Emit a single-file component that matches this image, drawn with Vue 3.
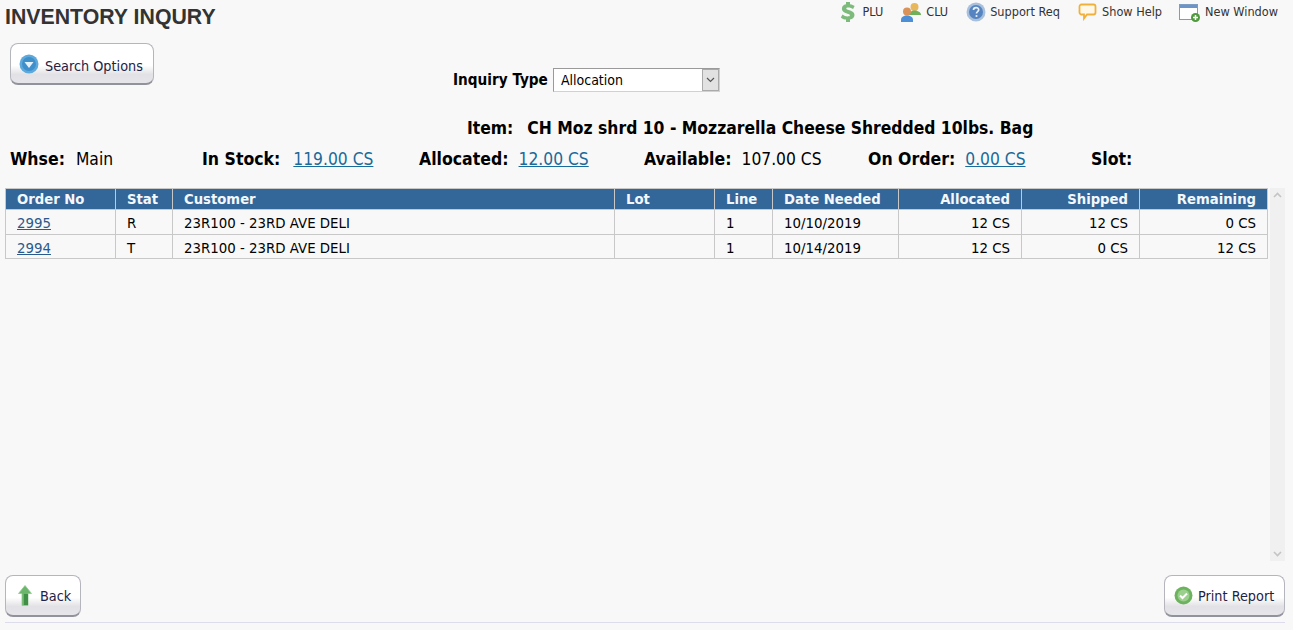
<script setup>
import { ref } from 'vue';

const inquiryType = ref('Allocation');

const columns = [
    { label: 'Order No', width: 110 },
    { label: 'Stat', width: 57 },
    { label: 'Customer', width: 442 },
    { label: 'Lot', width: 100 },
    { label: 'Line', width: 58 },
    { label: 'Date Needed', width: 126 },
    { label: 'Allocated', width: 123, right: true },
    { label: 'Shipped', width: 118, right: true },
    { label: 'Remaining', width: 128, right: true },
];

const rows = [
    { order: '2995', stat: 'R', customer: '23R100 - 23RD AVE DELI', line: '1', date: '10/10/2019', allocated: '12 CS', shipped: '12 CS', remaining: '0 CS' },
    { order: '2994', stat: 'T', customer: '23R100 - 23RD AVE DELI', line: '1', date: '10/14/2019', allocated: '12 CS', shipped: '0 CS', remaining: '12 CS' },
];
</script>

<template>
    <div class="page">
        <header class="top">
            <h1>INVENTORY INQURY</h1>
            <nav class="tools">
                <a class="tool plu">
                    <svg width="18" height="22" viewBox="0 0 18 22">
                        <path d="M7 1h4v2.2c2 .3 3.6 1 4.6 1.8l-1.500 3c-1.300-.8-3-1.500-4.800-1.500-1.300 0-2 .4-2 1 0 .8 1.100 1.100 3 1.700 3 .9 5.200 2 5.200 4.800 0 2.300-1.700 4-4.500 4.500V21H7v-2.400c-2.200-.3-4-1.100-5.200-2.200l1.700-3c1.400 1.100 3.300 2 5.200 2 1.400 0 2.200-.4 2.200-1.200 0-.9-1.200-1.200-3-1.800-2.800-.9-5-2-5-4.700C2.900 5.500 4.500 3.800 7 3.300z" fill="#7dbb7d" />
                    </svg>
                    <span>PLU</span>
                </a>
                <a class="tool clu">
                    <svg width="22" height="20" viewBox="0 0 22 20">
                        <circle cx="14.500" cy="5" r="4" fill="#e8b75c" />
                        <path d="M9 13c0-3 2.500-4.500 5.500-4.500S21 10 21 13z" fill="#6fb05c" />
                        <circle cx="7" cy="9.500" r="4" fill="#d9935a" />
                        <path d="M1 20v-2c0-3 2.500-4.500 6-4.500s6 1.500 6 4.500v2z" fill="#4c8fd6" />
                    </svg>
                    <span>CLU</span>
                </a>
                <a class="tool support">
                    <svg width="20" height="20" viewBox="0 0 20 20">
                        <circle cx="10" cy="10" r="9.500" fill="#a9c0dc" />
                        <circle cx="10" cy="10" r="7" fill="#5584c0" />
                        <path d="M7.500 8c0-3.200 5.200-3.200 5.200-.2 0 1.900-2.200 1.900-2.200 3.700" fill="none" stroke="#e8f0fa" stroke-width="1.700" />
                        <circle cx="10.500" cy="14" r="1.100" fill="#e8f0fa" />
                    </svg>
                    <span>Support Req</span>
                </a>
                <a class="tool help">
                    <svg width="19" height="18" viewBox="0 0 19 18">
                        <path d="M3.500 1.500h12a2 2 0 0 1 2 2v6a2 2 0 0 1-2 2H9l-3 4v-4H3.500a2 2 0 0 1-2-2v-6a2 2 0 0 1 2-2z" fill="#fff8e6" stroke="#f0b13c" stroke-width="1.800" />
                    </svg>
                    <span>Show Help</span>
                </a>
                <a class="tool window">
                    <svg width="22" height="20" viewBox="0 0 22 20">
                        <rect x="0.500" y="2.500" width="18" height="15" fill="#fff" stroke="#7d9cc4" />
                        <rect x="1" y="3" width="17" height="3" fill="#6d94c8" />
                        <circle cx="16.500" cy="15.500" r="4.500" fill="#4f9a3d" />
                        <path d="M16.500 13v5M14 15.500h5" stroke="#fff" stroke-width="1.500" />
                    </svg>
                    <span>New Window</span>
                </a>
            </nav>
        </header>

        <section class="search-row">
            <button class="btn search-btn">
                <svg width="20" height="20" viewBox="0 0 20 20">
                    <circle cx="10" cy="10" r="9.500" fill="#5ea9dc" />
                    <circle cx="10" cy="10" r="7" fill="#3f8fcb" />
                    <path d="M5.500 8h9L10 14z" fill="#e6f2fb" />
                </svg>
                <span>Search Options</span>
            </button>
            <label class="inquiry">
                <b>Inquiry Type</b>
                <span class="fake-select">
                    <span class="select-value">{{ inquiryType }}</span>
                    <span class="select-arrow">
                        <svg width="9" height="6" viewBox="0 0 9 6"><path d="M1 1l3.500 3.500L8 1" fill="none" stroke="#555" stroke-width="1.200" /></svg>
                    </span>
                </span>
            </label>
        </section>

        <div class="item-line"><b class="item-label">Item:</b><b>CH Moz shrd 10 - Mozzarella Cheese Shredded 10lbs. Bag</b></div>

        <div class="summary">
            <div><b>Whse:</b><span>Main</span></div>
            <div><b>In Stock:</b><a>119.00 CS</a></div>
            <div><b>Allocated:</b><a>12.00 CS</a></div>
            <div><b>Available:</b><span>107.00 CS</span></div>
            <div><b>On Order:</b><a>0.00 CS</a></div>
            <div><b>Slot:</b></div>
        </div>

        <div class="grid-area">
            <table>
                <colgroup>
                    <col v-for="c in columns" :key="c.label" :style="{ width: c.width + 'px' }" />
                </colgroup>
                <thead>
                    <tr>
                        <th v-for="c in columns" :key="c.label" :class="{ right: c.right }">{{ c.label }}</th>
                    </tr>
                </thead>
                <tbody>
                    <tr v-for="r in rows" :key="r.order">
                        <td><a>{{ r.order }}</a></td>
                        <td>{{ r.stat }}</td>
                        <td>{{ r.customer }}</td>
                        <td></td>
                        <td>{{ r.line }}</td>
                        <td>{{ r.date }}</td>
                        <td class="right">{{ r.allocated }}</td>
                        <td class="right">{{ r.shipped }}</td>
                        <td class="right">{{ r.remaining }}</td>
                    </tr>
                </tbody>
            </table>
            <div class="scrollbar">
                <svg width="9" height="6" viewBox="0 0 9 6"><path d="M1 5l3.500-3.500L8 5" fill="none" stroke="#c4c4c4" stroke-width="1.600" /></svg>
                <svg width="9" height="6" viewBox="0 0 9 6"><path d="M1 1l3.500 3.500L8 1" fill="none" stroke="#c4c4c4" stroke-width="1.600" /></svg>
            </div>
        </div>

        <footer class="bottom">
            <button class="btn back-btn">
                <svg width="14" height="21" viewBox="0 0 14 21">
                    <path d="M7 0.500L13.500 8.500H10V20.500H4V8.500H0.500z" fill="#6cb56c" stroke="#8fcb8f" stroke-width="0.800" />
                    <rect x="6" y="9" width="4" height="11" fill="#3f8f46" />
                </svg>
                <span>Back</span>
            </button>
            <button class="btn print-btn">
                <svg width="19" height="19" viewBox="0 0 19 19">
                    <circle cx="9.500" cy="9.500" r="9" fill="#6db35f" />
                    <circle cx="9.500" cy="9.500" r="6" fill="#9bcf8e" />
                    <path d="M6 9.500l2.500 2.500L13 7.500" fill="none" stroke="#fff" stroke-width="2" />
                </svg>
                <span>Print Report</span>
            </button>
        </footer>
    </div>
</template>

<style scoped>
.page {
    height: 630px;
    box-sizing: border-box;
    display: flex;
    flex-direction: column;
    font-family: "DejaVu Sans Condensed", "DejaVu Sans", sans-serif;
    font-size: 14px;
    color: #000;
    background: #f8f8f8;
    overflow: hidden;
}

.top {
    height: 43px;
    display: flex;
    justify-content: space-between;
    padding-left: 5px;
}

h1 {
    margin: 5px 0 0;
    font-family: "Liberation Sans", Arial, sans-serif;
    font-size: 21.300px;
    line-height: 24px;
    font-weight: bold;
    color: #333;
}

.tools {
    display: flex;
    padding-right: 15px;
    height: 23px;
    align-items: center;
}

.tool {
    display: flex;
    align-items: center;
    gap: 4px;
    font-size: 12.600px;
    color: #333;
}

.plu { margin-right: 17px; gap: 5px; }
.clu { margin-right: 18px; gap: 4px; }
.support { margin-right: 18px; }
.help { margin-right: 17px; gap: 5px; }

.search-row {
    position: relative;
    height: 68px;
    padding-left: 10px;
}

.btn {
    display: flex;
    align-items: center;
    box-sizing: border-box;
    height: 42px;
    padding: 0;
    font-family: inherit;
    font-size: 14.300px;
    color: #222244;
    border: 1px solid #b5b5bd;
    border-bottom: 2px solid #92929c;
    border-radius: 8px;
    background: linear-gradient(#ffffff 0%, #ffffff 55%, #e2e2e6 78%, #e6e6ea 100%);
}

.btn span {
    padding-top: 1px;
}

.search-btn {
    width: 144px;
    gap: 6px;
    padding-left: 8px;
}

.search-btn span {
    padding-top: 5px;
}

.inquiry {
    position: absolute;
    left: 453px;
    top: 25px;
    display: flex;
    align-items: center;
    gap: 5px;
}

.inquiry b {
    font-size: 15.200px;
}

.fake-select {
    display: flex;
    box-sizing: border-box;
    width: 167px;
    height: 24px;
    background: #fff;
    border: 1px solid;
    border-color: #9a9a9a #d0d0da #d0d0da #9a9a9a;
}

.select-value {
    flex: 1;
    padding-left: 7px;
    line-height: 22px;
}

.select-arrow {
    width: 17px;
    display: flex;
    align-items: center;
    justify-content: center;
    background: #e2e2e2;
    border: 1px solid #aaa;
    box-sizing: border-box;
}

.item-line {
    height: 31px;
    padding-left: 467px;
    font-size: 17.350px;
    line-height: 34px;
}

.item-label {
    margin-right: 14px;
}

.summary {
    display: grid;
    grid-template-columns: 192px 217px 225px 224px 223px 1fr;
    height: 46px;
    padding-left: 10px;
    font-size: 17.300px;
    line-height: 34px;
    align-items: start;
}

.summary > div {
    display: flex;
}

.summary b {
    margin-right: 11px;
    font-size: 17.500px;
}

.summary div:nth-child(2) b {
    margin-right: 13px;
}

.summary div:nth-child(3) b,
.summary div:nth-child(4) b,
.summary div:nth-child(5) b {
    margin-right: 10px;
}

.summary a {
    color: #1a6a9a;
    text-decoration: underline;
}

.grid-area {
    position: relative;
    height: 373px;
    margin: 0 8px 0 5px;
    flex-shrink: 0;
}

table {
    width: 1262px;
    table-layout: fixed;
    border-collapse: collapse;
    font-size: 14.850px;
}

th, td {
    box-sizing: border-box;
    padding: 0 11px;
    border: 1px solid #c8c8c8;
    text-align: left;
    white-space: nowrap;
}

th {
    height: 21px;
    background: #336699;
    color: #f4f8fc;
    font-size: 14.700px;
    font-weight: bold;
    line-height: 18px;
}

td {
    height: 24.500px;
    padding-top: 4px;
    line-height: 19px;
}

td a {
    color: #2a5a8c;
    text-decoration: underline;
}

th.right, td.right {
    text-align: right;
}

.scrollbar {
    position: absolute;
    right: 0;
    top: 0;
    bottom: 0;
    width: 15px;
    background: #f0f0f0;
    display: flex;
    flex-direction: column;
    justify-content: space-between;
    align-items: center;
    padding: 4px 0;
    box-sizing: border-box;
}

.bottom {
    display: flex;
    justify-content: space-between;
    margin: 14px 8px 0 5px;
    padding-bottom: 6px;
    height: 48px;
    box-sizing: border-box;
    border-bottom: 1px solid #dcdcec;
    flex-shrink: 0;
}

.back-btn {
    width: 76px;
    gap: 8px;
    padding-left: 12px;
}

.print-btn {
    width: 121px;
    gap: 5px;
    padding-left: 9px;
}
</style>
